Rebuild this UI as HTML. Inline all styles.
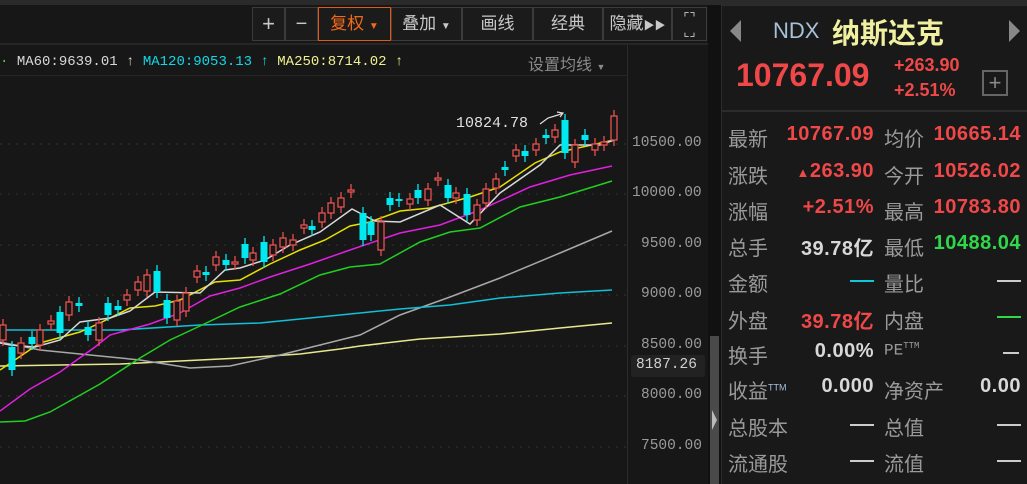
<!DOCTYPE html>
<html><head><meta charset="utf-8"><style>
*{margin:0;padding:0;box-sizing:border-box}
body{width:1027px;height:484px;background:#171717;position:relative;overflow:hidden;font-family:"Liberation Sans","Noto Sans CJK SC",sans-serif}
.a{position:absolute;white-space:nowrap}
.btn{position:absolute;top:7px;height:34px;border:1px solid #3c3c3c;color:#c8c8c8;font-size:17px;line-height:32px;text-align:center;background:#1b1b1b}
.mono{font-family:"Liberation Mono","DejaVu Sans Mono",monospace}
.lab{position:absolute;left:728px;font-size:20px;color:#9a9a9a}
.lab2{position:absolute;left:884px;font-size:20px;color:#9a9a9a}
.v1{position:absolute;right:153px;font-size:20px;font-weight:bold;text-align:right;letter-spacing:0.5px}
.v2{position:absolute;right:6px;font-size:20px;font-weight:bold;text-align:right;letter-spacing:0.5px}
.r{color:#f04848}.g{color:#2ed84a}.w{color:#d8d8d8}
.ax{position:absolute;left:632px;font-size:14.5px;color:#9a9a9a;font-family:"Liberation Mono",monospace}
</style></head><body>
<div class="a" style="left:0;top:0;width:1027px;height:5px;background:#2a2a2a"></div>
<div class="a" style="left:0;top:43px;width:708px;height:2px;background:#262626"></div>
<div class="a" style="left:708px;top:5px;width:13px;height:479px;background:#111"></div>
<div class="a" style="left:710px;top:336px;width:9px;height:148px;background:#4a4a4a"></div>
<div class="a" style="left:712px;top:410px;width:0;height:0;border-left:5px solid #bbb;border-top:10px solid transparent;border-bottom:10px solid transparent"></div>
<div class="a" style="left:627px;top:45px;width:1px;height:439px;background:#2c2c2c"></div>
<div class="a" style="left:0;top:75px;width:627px;height:1px;background:#262626"></div>

<div class="btn" style="left:252px;width:33px;font-size:22px">+</div>
<div class="btn" style="left:285px;width:33px;font-size:20px">−</div>
<div class="btn" style="left:318px;width:73px;border-color:#e05a10;color:#f06a18">复权 <span style="font-size:10px">▼</span></div>
<div class="btn" style="left:391px;width:71px">叠加 <span style="font-size:10px">▼</span></div>
<div class="btn" style="left:462px;width:71px">画线</div>
<div class="btn" style="left:533px;width:70px">经典</div>
<div class="btn" style="left:603px;width:69px">隐藏<span style="font-size:11px">▶▶</span></div>
<div class="btn" style="left:672px;width:35px;font-size:13px;line-height:14px;padding-top:3px">⌜⌝<br>⌞⌟</div>

<div class="a mono" style="left:0;top:53px;font-size:14px;line-height:18px"><span style="color:#2ed84a">·</span> <span style="color:#d8d8d8">MA60:9639.01 ↑</span> <span style="color:#10d8e8">MA120:9053.13 ↑</span> <span style="color:#f0f090">MA250:8714.02 ↑</span></div>
<div class="a" style="left:528px;top:51px;font-size:16px;color:#8a8a8a">设置均线 <span style="font-size:9px">▼</span></div>

<svg class="a" style="left:0;top:76px" width="627" height="408" viewBox="0 76 627 408">
<g stroke="#333" stroke-dasharray="2 6" stroke-width="1">
<line x1="0" y1="144" x2="627" y2="144"/><line x1="0" y1="194" x2="627" y2="194"/><line x1="0" y1="245" x2="627" y2="245"/><line x1="0" y1="295" x2="627" y2="295"/><line x1="0" y1="346" x2="627" y2="346"/><line x1="0" y1="396" x2="627" y2="396"/><line x1="0" y1="447" x2="627" y2="447"/>
</g>
<g fill="none" stroke-width="1.5">
<polyline stroke="#e8e890" points="0,366 60,365 120,364 180,361 240,358 300,354 340,349 360,346 420,339 500,334 560,328 612,323"/>
<polyline stroke="#a8a8a8" points="0,342 40,350 90,355 140,360 190,368 230,366 280,355 320,345 360,335 400,315 450,297 500,278 560,253 612,231"/>
<polyline stroke="#10c0d8" points="0,330 120,330 200,325 260,323 360,313 400,309 450,305 500,298 560,293 612,290"/>
<polyline stroke="#20d020" points="0,422 25,421 50,412 100,384 140,358 170,340 200,326 240,307 280,294 320,275 350,267 380,264 420,242 450,232 480,228 520,207 560,197 612,181"/>
<polyline stroke="#e020e0" points="0,411 30,389 60,372 95,347 110,335 150,324 180,313 210,296 240,288 270,277 310,264 350,250 400,233 440,225 480,210 530,187 570,175 612,166"/>
<polyline stroke="#e8e000" points="0,370 40,343 80,332 100,323 130,308 155,306 180,300 215,282 240,280 270,264 300,250 325,240 350,226 370,222 400,211 430,208 470,197 500,187 535,163 560,152 614,140"/>
<polyline stroke="#d8d8d8" points="0,343 10,345 35,347 60,340 80,322 110,318 130,311 155,292 200,293 225,270 240,268 265,260 290,245 320,232 352,209 375,221 400,222 440,205 470,224 500,193 540,165 560,145 600,145 614,140"/>
</g>
<g id="c" stroke-width="1.3"></g>
<text x="456" y="127" fill="#e0e0e0" font-size="15" font-family="Liberation Mono,monospace">10824.78</text>
<path d="M540 124 L548 118 L558 115 L563 113 M557 112 L563 113 L560 117" stroke="#e0e0e0" fill="none" stroke-width="1.2"/>
</svg>
<script>
var d=[[3,325,340,'r'],[12,347,370,'c'],[21,343,353,'r'],[32,337,344,'c'],[40,330,345,'r'],[51,321,324,'r'],[60,312,333,'c'],[69,302,315,'r'],[79,303,306,'c'],[88,327,335,'c'],[99,323,340,'r'],[108,303,315,'c'],[118,306,310,'c'],[127,295,300,'r'],[138,282,290,'r'],[147,275,291,'r'],[157,271,292,'c'],[167,300,318,'c'],[177,301,320,'r'],[186,293,311,'r'],[197,271,277,'r'],[206,272,275,'c'],[216,257,265,'r'],[226,260,265,'c'],[235,262,264,'r'],[245,244,258,'c'],[253,253,260,'r'],[264,242,262,'c'],[273,245,255,'r'],[283,238,247,'r'],[293,240,245,'r'],[304,225,228,'r'],[312,226,230,'c'],[322,213,222,'r'],[331,203,213,'r'],[341,198,207,'r'],[351,190,192,'r'],[363,213,240,'c'],[371,222,235,'c'],[381,222,250,'r'],[390,198,205,'c'],[399,199,201,'c'],[410,199,204,'r'],[418,190,198,'c'],[428,189,200,'r'],[438,178,180,'r'],[448,185,198,'c'],[456,193,198,'r'],[467,194,215,'c'],[477,205,220,'r'],[486,189,203,'r'],[496,179,188,'r'],[505,167,170,'c'],[516,150,156,'r'],[525,151,156,'c'],[536,144,150,'r'],[546,135,138,'c'],[555,130,137,'r'],[565,120,153,'c'],[575,145,162,'r'],[585,135,140,'c'],[595,144,150,'r'],[604,142,145,'r'],[614,116,140,'r']];
var s='';d.forEach(function(k){var x=k[0],t=k[1],b=k[2],col=k[3]=='r'?'#e85050':'#00e8f0';
s+='<line x1="'+x+'" y1="'+(t-6)+'" x2="'+x+'" y2="'+(b+6)+'" stroke="'+col+'"/>';
if(k[3]=='r')s+='<rect x="'+(x-3)+'" y="'+t+'" width="6" height="'+Math.max(b-t,2)+'" fill="#171717" stroke="'+col+'"/>';
else s+='<rect x="'+(x-3.5)+'" y="'+t+'" width="7" height="'+Math.max(b-t,2)+'" fill="'+col+'"/>';});
document.getElementById('c').innerHTML=s;
</script>

<div class="ax" style="top:135px">10500.00</div>
<div class="ax" style="top:185px">10000.00</div>
<div class="ax" style="top:236px;left:641px">9500.00</div>
<div class="ax" style="top:286px;left:641px">9000.00</div>
<div class="ax" style="top:337px;left:641px">8500.00</div>
<div class="a" style="left:631px;top:355px;width:74px;height:22px;background:#222;border-radius:3px"></div>
<div class="ax" style="top:357px;left:636px;color:#d0d0d0">8187.26</div>
<div class="ax" style="top:387px;left:641px">8000.00</div>
<div class="ax" style="top:438px;left:641px">7500.00</div>

<div class="a" style="left:721px;top:5px;width:306px;height:479px;border-left:1px solid #2c2c2c;border-top:1px solid #2c2c2c;background:#191919"></div>
<div class="a" style="left:721px;top:110px;width:306px;height:2px;background:#2c2c2c"></div>
<div class="a" style="left:730px;top:20px;width:0;height:0;border-right:11px solid #888;border-top:11px solid transparent;border-bottom:11px solid transparent"></div>
<div class="a" style="left:1009px;top:20px;width:0;height:0;border-left:11px solid #888;border-top:11px solid transparent;border-bottom:11px solid transparent"></div>
<div class="a" style="left:773px;top:18px;font-size:22px;color:#a8c0d8">NDX</div>
<div class="a" style="left:832px;top:12px;font-size:28px;color:#f0f0a0;font-weight:bold">纳斯达克</div>
<div class="a" style="left:736px;top:57px;font-size:32px;color:#f04848;font-weight:bold">10767.09</div>
<div class="a" style="left:894px;top:55px;font-size:18px;color:#f04848;font-weight:bold">+263.90</div>
<div class="a" style="left:894px;top:80px;font-size:18px;color:#f04848;font-weight:bold">+2.51%</div>
<div class="a" style="left:982px;top:70px;width:26px;height:26px;border:2px solid #666;color:#888;font-size:22px;line-height:21px;text-align:center">+</div>

<div class="lab" style="top:123px">最新</div><div class="v1 r" style="top:123px">10767.09</div>
<div class="lab2" style="top:123px">均价</div><div class="v2 r" style="top:123px">10665.14</div>
<div class="lab" style="top:160px">涨跌</div><div class="v1 r" style="top:160px"><span style="font-size:13px">▲</span>263.90</div>
<div class="lab2" style="top:160px">今开</div><div class="v2 r" style="top:160px">10526.02</div>
<div class="lab" style="top:196px">涨幅</div><div class="v1 r" style="top:196px">+2.51%</div>
<div class="lab2" style="top:196px">最高</div><div class="v2 r" style="top:196px">10783.80</div>
<div class="lab" style="top:232px">总手</div><div class="v1 w" style="top:232px">39.78亿</div>
<div class="lab2" style="top:232px">最低</div><div class="v2 g" style="top:232px">10488.04</div>
<div class="lab" style="top:268px">金额</div><div class="a" style="left:850px;top:280px;width:24px;height:2px;background:#10c8d8"></div>
<div class="lab2" style="top:268px">量比</div><div class="a" style="left:997px;top:280px;width:24px;height:2px;background:#ccc"></div>
<div class="lab" style="top:305px">外盘</div><div class="v1 r" style="top:305px">39.78亿</div>
<div class="lab2" style="top:305px">内盘</div><div class="a" style="left:997px;top:316px;width:24px;height:2px;background:#2ed84a"></div>
<div class="lab" style="top:340px">换手</div><div class="v1 w" style="top:340px">0.00%</div>
<div class="lab2" style="top:341px;font-size:16px;font-family:'Liberation Mono',monospace">PE<sup style="font-size:9px">TTM</sup></div><div class="a" style="left:1003px;top:352px;width:16px;height:2px;background:#ccc"></div>
<div class="lab" style="top:375px">收益<sup style="font-size:9px;color:#a8c0d8">TTM</sup></div><div class="v1 w" style="top:375px">0.000</div>
<div class="lab2" style="top:375px">净资产</div><div class="v2 w" style="top:375px">0.00</div>
<div class="lab" style="top:412px">总股本</div><div class="a" style="left:850px;top:424px;width:24px;height:2px;background:#ccc"></div>
<div class="lab2" style="top:412px">总值</div><div class="a" style="left:997px;top:424px;width:24px;height:2px;background:#ccc"></div>
<div class="lab" style="top:448px">流通股</div><div class="a" style="left:850px;top:460px;width:24px;height:2px;background:#ccc"></div>
<div class="lab2" style="top:448px">流值</div><div class="a" style="left:997px;top:460px;width:24px;height:2px;background:#ccc"></div>
</body></html>
